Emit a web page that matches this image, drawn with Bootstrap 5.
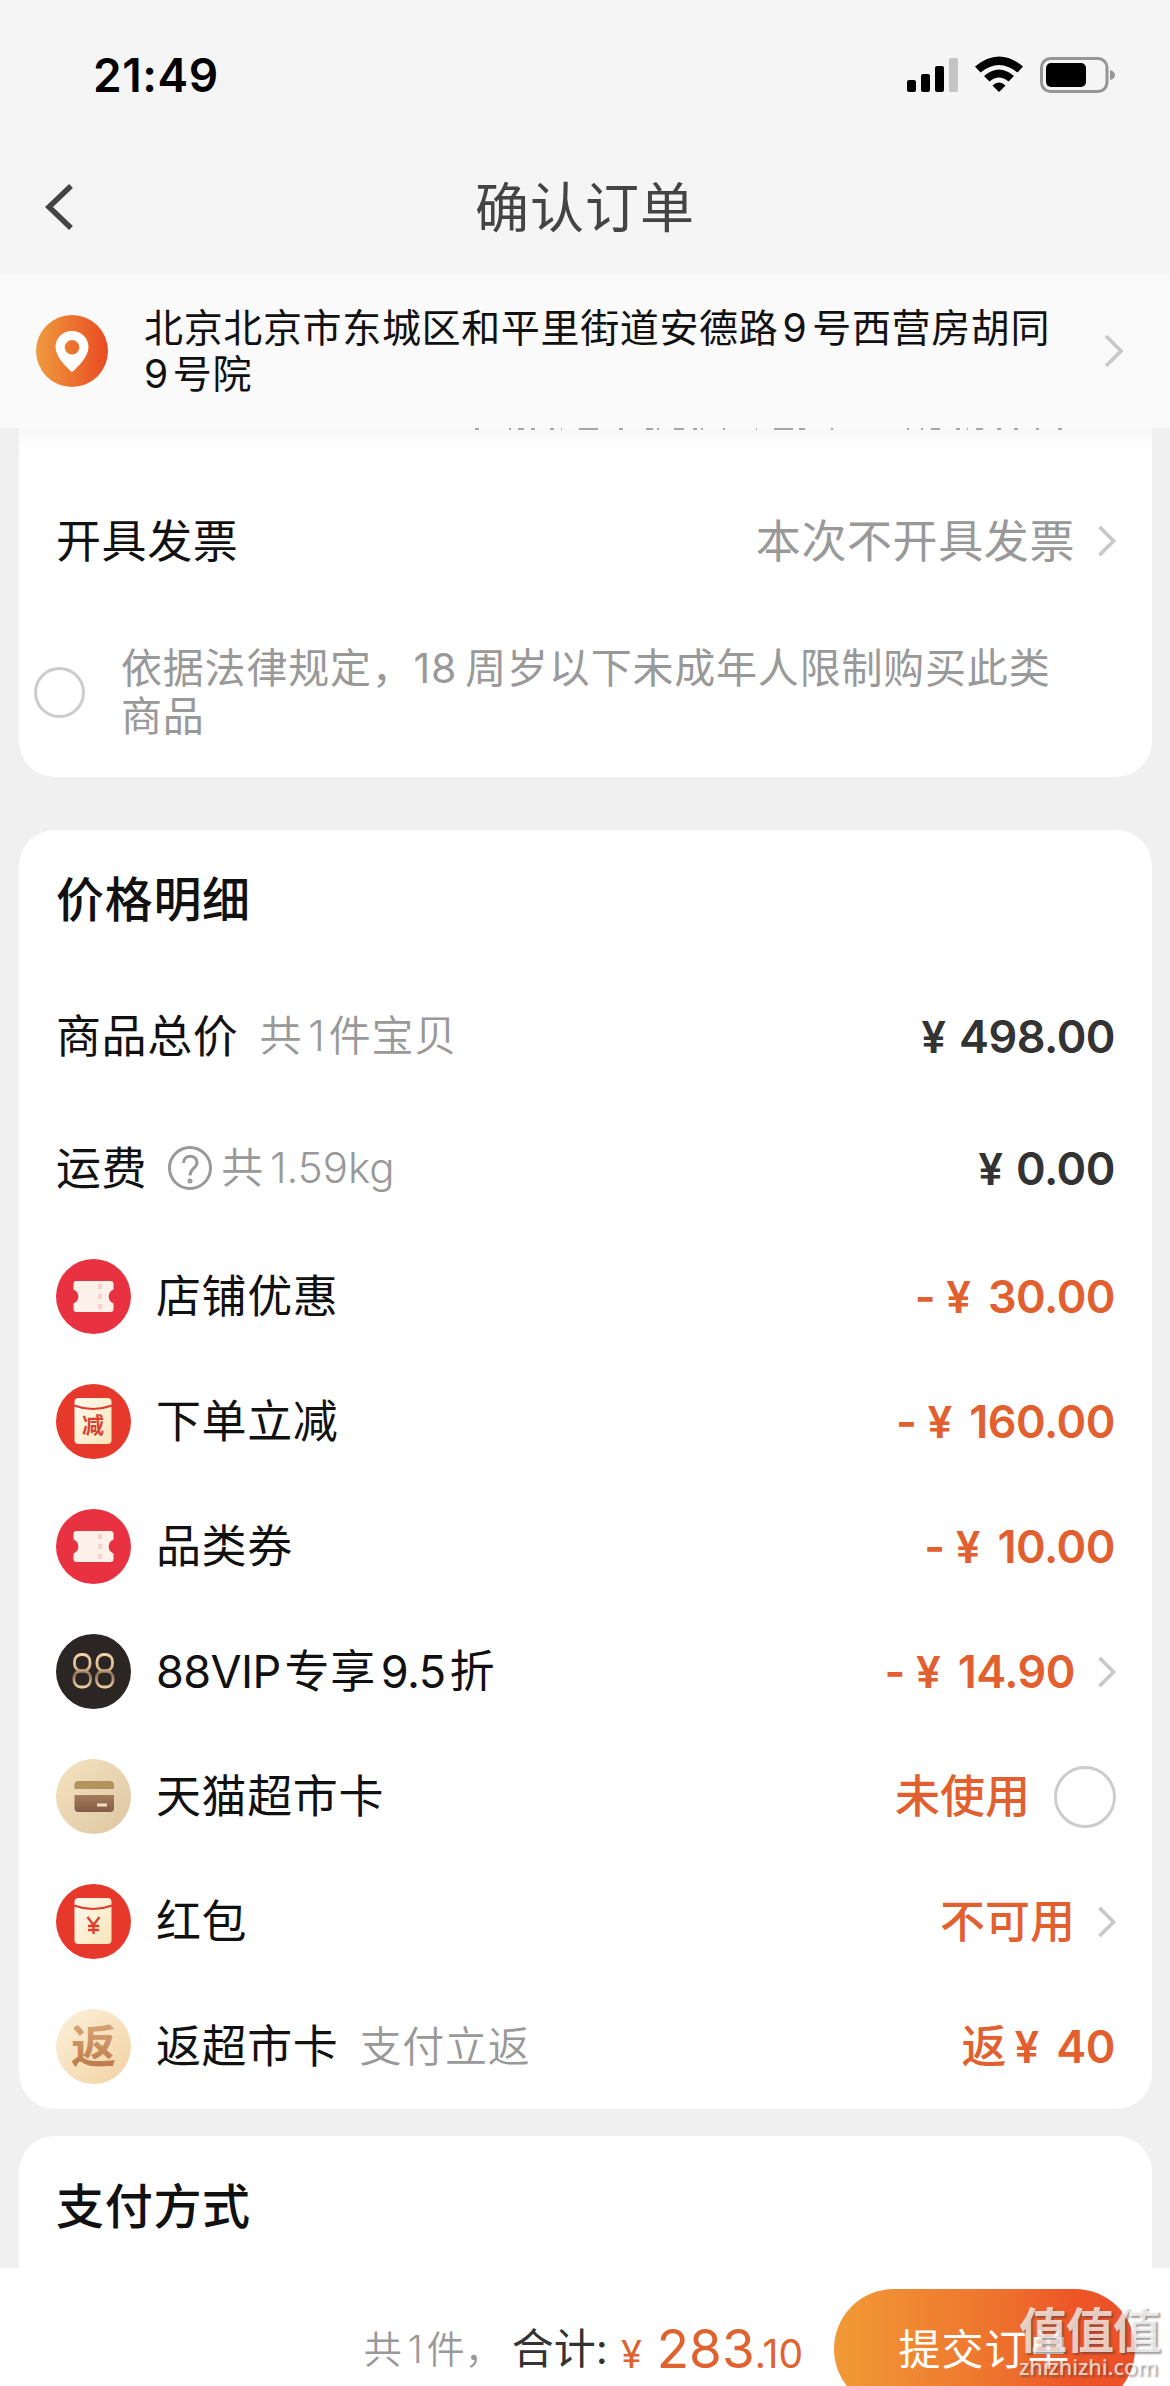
<!DOCTYPE html>
<html lang="zh-CN">
<head>
<meta charset="utf-8">
<meta name="viewport" content="width=device-width, initial-scale=1">
<title>确认订单</title>
<link href="https://cdn.jsdelivr.net/npm/bootstrap@5.3.0/dist/css/bootstrap.min.css" rel="stylesheet">
<style>
  body { background:#f0f0f0; font-family:Inter,"Noto Sans CJK SC",sans-serif; color:#111; font-size:45px; line-height:1; overflow:hidden; white-space:nowrap; }
  .screen { width:1170px; height:2386px; overflow:hidden; }
  .topbar { height:274px; background:#f5f5f5; }
  .status { height:149px; padding:0 55px 0 93px; }
  .clock { font-size:46px; font-weight:600; color:#000; letter-spacing:.6px; }
  .titlebar { height:116px; padding:0 45px; }
  .page-title { font-size:54px; color:#444; letter-spacing:1px; padding-top:3px; }
  .side { width:28px; }
  .address { height:154px; background:#fafafa; padding:0 46px 0 36px; }
  .address-text { font-size:39px; line-height:46px; letter-spacing:.65px; margin-left:36px; }
  .thin-gap { margin:0 5px 0 4px; }
  .tail { margin-left:4px; }
  .content-sheet { background:#fff; border-radius:36px; margin:0 18px 0 19px; }
  .first-sheet { height:349px; border-radius:0 0 36px 36px; background:linear-gradient(#f8f8f8,#fff 24px); }
  .price-sheet { margin-top:53px; }
  .peek { display:block; height:47px; }
  .line-row { height:132px; padding:0 37px; }
  .promo-row { height:125px; padding:0 37px; }
  .promo-row .label-text { margin-left:25px; }
  .label-text { letter-spacing:.6px; }
  .latin { letter-spacing:-.6px; }
  .heading { height:141px; padding:0 37px; font-size:48px; font-weight:500; letter-spacing:.7px; }
  .price-sheet .heading { height:140px; }
  .muted { color:#999; }
  .notice { height:170px; padding-left:15px; font-size:41px; line-height:48px; letter-spacing:.8px; }
  .notice > div { margin-left:36px; }
  .ring { width:51px; height:51px; border:3px solid #ccc; border-radius:50%; }
  .ring-lg { width:62px; height:62px; margin-left:24px; margin-right:-1px; }
  .amount { font-size:45px; font-weight:600; color:#333; letter-spacing:-.5px; }
  .amount .yen { font-size:44px; margin-right:13px; letter-spacing:0; }
  .off, .off .yen { color:#e25f2f; }
  .off .yen { margin-right:17px; }
  .dash { margin-right:11px; }
  .amount.cn, .amount .cn { font-weight:500; letter-spacing:0; }
  .arrow { margin-left:22px; margin-right:-2px; }
  .count { font-size:42px; margin-left:21px; letter-spacing:.8px; font-weight:350; }
  .num { margin:0 4px 0 6px; letter-spacing:0; }
  .help { margin-left:21px; }
  .weight { margin-left:9px; }
  .pay-sheet { height:132px; margin-top:27px; border-radius:36px 36px 0 0; }
  .footer-bar { height:118px; background:#fff; padding:21px 35px 0 0; }
  .sum { height:120px; color:#333; }
  .total { color:#e0622f; }
  .foot-count { font-size:38px; font-weight:350; }
  .foot-label { font-size:42px; margin-left:9px; }
  .foot-yen { font-size:38px; margin:0 15px 0 13px; }
  .foot-int { font-size:53px; }
  .foot-dec { font-size:39px; }
  .submit { width:301px; height:120px; margin-left:31px; border-radius:60px; border:0; color:#fff; font-size:42px; letter-spacing:1px; background:linear-gradient(90deg,#f19a36,#ee722e 55%,#ed5527 80%,#ec5028); }
  .watermark { position:absolute; left:1019px; top:2306px; width:146px; color:rgba(255,255,255,.74); text-shadow:2px 2px 2px rgba(70,60,60,.5); }
  .wm-a { font-size:48px; font-weight:700; line-height:50px; letter-spacing:-1px; }
  .wm-b { font-family:"Noto Sans",sans-serif; font-size:21.5px; font-weight:500; line-height:22px; }
</style>
<script src="https://cdn.jsdelivr.net/npm/bootstrap@5.3.0/dist/js/bootstrap.bundle.min.js"></script>
</head>
<body>
<svg width="0" height="0" class="position-absolute">
  <defs>
    <linearGradient id="pinBg"><stop offset="0" stop-color="#ee9b3e"/><stop offset="1" stop-color="#ea4b22"/></linearGradient>
    <linearGradient id="gold" x1="0" y1="0" x2="1" y2="1"><stop offset="0" stop-color="#f6e3c0"/><stop offset="1" stop-color="#dcc6a2"/></linearGradient>
    <linearGradient id="gold2" x1="0" y1="0" x2="1" y2="1"><stop offset="0" stop-color="#fcf1db"/><stop offset="1" stop-color="#f2d2a2"/></linearGradient>
    <linearGradient id="cardFoot" x1="0" y1="0" x2="0" y2="1"><stop offset="0" stop-color="#a67c5a"/><stop offset="1" stop-color="#805b48"/></linearGradient>
    <linearGradient id="envelope" x1="0" y1="0" x2="1" y2="1"><stop offset="0" stop-color="#fffaf0"/><stop offset="1" stop-color="#fbe5b8"/></linearGradient>
    <linearGradient id="fan" x1="0" y1="0" x2="0" y2="1"><stop offset="0" stop-color="#dba978"/><stop offset="1" stop-color="#b87445"/></linearGradient>
    <linearGradient id="neon" gradientUnits="userSpaceOnUse" x1="0" y1="19" x2="0" y2="54"><stop offset="0" stop-color="#f3d3a8"/><stop offset=".45" stop-color="#d9b78e"/><stop offset=".6" stop-color="#8f7156"/><stop offset="1" stop-color="#f1d0a4"/></linearGradient>
    <symbol id="ticket" viewBox="0 0 75 75">
      <circle cx="37.500" cy="37.500" r="37.500" fill="#e83241"/>
      <path fill="#fdf1ea" d="M20.500 22h34a3 3 0 0 1 3 3v5.500a7.500 7.500 0 0 0 0 14v5.500a3 3 0 0 1-3 3h-34a3 3 0 0 1-3-3v-5.500a7.500 7.500 0 0 0 0-14v-5.500a3 3 0 0 1 3-3z"/>
      <path d="M44 25v5m0 5v5m0 5v5" stroke="#fbcfcb" stroke-width="4"/>
    </symbol>
    <symbol id="packet" viewBox="0 0 75 75">
      <circle cx="37.500" cy="37.500" r="37.500" fill="#e7392b"/>
      <rect x="18.500" y="14" width="37" height="46" rx="4" fill="url(#envelope)"/>
      <path d="M18 21.500q19 7 38 0" fill="none" stroke="#e03a2e" stroke-width="2"/>
    </symbol>
    <symbol id="next" viewBox="0 0 20 34"><path d="M2 2l15 15L2 32" fill="none" stroke="#c8c8c8" stroke-width="3.800"/></symbol>
  </defs>
</svg>
<div class="screen position-relative d-flex flex-column">
  <header class="topbar">
    <div class="status d-flex align-items-center justify-content-between">
      <span class="clock">21:49</span>
      <svg width="208" height="38" viewBox="907 55 208 38">
        <rect x="907" y="79" width="9" height="12" rx="2"/><rect x="921" y="73" width="9" height="18" rx="2"/><rect x="935" y="65" width="9" height="26" rx="2"/><rect x="949" y="57" width="9" height="34" rx="2" fill="#c4c4c4"/>
        <path d="M975 65.500Q999 45.500 1023 65.500L1017.500 71.500Q999 56.500 980.500 71.500zM984 75Q999 62 1014 75L1008.500 80.500Q999 72.500 989.500 80.500zM992.500 84.500Q999 78.500 1005.500 84.500L999 91z" fill="#000"/>
        <rect x="1041.500" y="57.500" width="65.500" height="33" rx="9" fill="none" stroke="#969696" stroke-width="3"/>
        <rect x="1046" y="62" width="40" height="24" rx="5"/>
        <path d="M1110 69q5 1.500 5 5t-5 5z" fill="#969696"/>
      </svg>
    </div>
    <div class="titlebar d-flex align-items-center justify-content-between">
      <svg class="side" height="46" viewBox="0 0 28 46"><path d="M26 2L4 23l22 21" fill="none" stroke="#444" stroke-width="5.500"/></svg>
      <span class="page-title">确认订单</span>
      <span class="side"></span>
    </div>
  </header>

  <section class="address d-flex align-items-center">
    <svg width="72" height="72" viewBox="0 0 72 72"><circle cx="36" cy="36" r="36" fill="url(#pinBg)"/><path fill="#fff" fill-rule="evenodd" d="M36 16c9.500 0 16.500 7 16.500 16C52.500 41.500 42 52 36 57 30 52 19.500 41.500 19.500 32 19.500 23 26.500 16 36 16zm0 9a7.300 7.300 0 1 0 0 14.600A7.300 7.300 0 0 0 36 25z"/></svg>
    <div class="address-text">北京北京市东城区和平里街道安德路<span class="thin-gap">9</span>号西营房胡同<br>9<span class="tail">号院</span></div>
    <svg class="ms-auto" width="20" height="34"><use href="#next"/></svg>
  </section>

  <section class="content-sheet first-sheet">
    <svg class="peek" width="1133" height="47" viewBox="19 427 1133 47"><path stroke="#8a8a8a" stroke-width="1.500" d="M475 428h4M509 428h2M518 428h6M531 428h4M550 428h4M561 428h1M579 428h19M619 428h4M646 428h7M657 428h2M674 428h10M693 428h4M701 428h2M723 428h2M756 428h1M774 428h19M799 428h6M831 428h2M907 428h2M921 428h2M931 428h9M956 428h4M967 428h1M976 428h7M997 428h4M1014 428h4M1036 428h3M1058 428h4"/></svg>
    <div class="line-row d-flex align-items-center">
      <span class="label-text">开具发票</span>
      <span class="muted label-text ms-auto">本次不开具发票</span>
      <svg class="arrow" width="20" height="32"><use href="#next"/></svg>
    </div>
    <div class="notice muted d-flex align-items-center">
      <span class="ring"></span>
      <div>依据法律规定，<span class="me-2">18</span>周岁以下未成年人限制购买此类<br>商品</div>
    </div>
  </section>

  <section class="content-sheet price-sheet">
    <div class="heading d-flex align-items-center">价格明细</div>
    <div class="line-row d-flex align-items-center"><span class="label-text">商品总价</span><span class="muted count">共<span class="num">1</span>件宝贝</span><span class="amount ms-auto"><span class="yen">¥</span>498.00</span></div>
    <div class="line-row d-flex align-items-center"><span class="label-text">运费</span>
      <svg class="help" width="44" height="44" viewBox="0 0 44 44" fill="none" stroke="#999" stroke-width="3"><circle cx="22" cy="22" r="20.500"/><path d="M15.500 17c0-9 13.500-9 13.500-.5 0 6-7 5.500-7 13"/><circle cx="22" cy="35" r="1"/></svg>
      <span class="muted count weight">共<span class="num latin">1.59kg</span></span><span class="amount ms-auto"><span class="yen">¥</span>0.00</span></div>
    <div class="promo-row d-flex align-items-center"><svg width="75" height="75"><use href="#ticket"/></svg><span class="label-text">店铺优惠</span><span class="amount off ms-auto"><span class="dash">-</span><span class="yen">¥</span>30.00</span></div>
    <div class="promo-row d-flex align-items-center"><svg width="75" height="75"><use href="#packet"/><text x="37" y="49" text-anchor="middle" font-size="22" font-weight="700" fill="#d9402f">减</text></svg><span class="label-text">下单立减</span><span class="amount off ms-auto"><span class="dash">-</span><span class="yen">¥</span>160.00</span></div>
    <div class="promo-row d-flex align-items-center"><svg width="75" height="75"><use href="#ticket"/></svg><span class="label-text">品类券</span><span class="amount off ms-auto"><span class="dash">-</span><span class="yen">¥</span>10.00</span></div>
    <div class="promo-row d-flex align-items-center"><svg width="75" height="75" viewBox="0 0 75 75"><circle cx="37.500" cy="37.500" r="37.500" fill="#2b2523"/><g fill="none" stroke="url(#neon)" stroke-width="2.800"><rect x="18.500" y="20.500" width="15.500" height="16.500" rx="7"/><rect x="18" y="37" width="16.500" height="16" rx="7"/><rect x="41" y="20.500" width="15.500" height="16.500" rx="7"/><rect x="40.500" y="37" width="16.500" height="16" rx="7"/></g></svg><span class="label-text"><span class="latin">88VIP</span><span class="thin-gap">专享</span><span class="latin">9.5</span><span class="tail">折</span></span><span class="amount off ms-auto"><span class="dash">-</span><span class="yen">¥</span>14.90</span><svg class="arrow" width="20" height="32"><use href="#next"/></svg></div>
    <div class="promo-row d-flex align-items-center"><svg width="75" height="75" viewBox="0 0 75 75"><circle cx="37.500" cy="37.500" r="37.500" fill="url(#gold)"/><path d="M18.500 30v-4a4 4 0 0 1 4-4h31.500a4 4 0 0 1 4 4v4z" fill="#b3945f"/><path d="M18.500 36H58v13a4 4 0 0 1-4 4H22.500a4 4 0 0 1-4-4z" fill="url(#cardFoot)"/><path d="M41 46h10" stroke="#f3dfc4" stroke-width="3"/></svg><span class="label-text">天猫超市卡</span><span class="amount off cn ms-auto">未使用</span><span class="ring ring-lg"></span></div>
    <div class="promo-row d-flex align-items-center"><svg width="75" height="75"><use href="#packet"/><path d="M31.500 33l6 8 6-8M37.500 41v9M32 42h11M32 46h11" stroke="#d9402f" stroke-width="2.300" fill="none"/></svg><span class="label-text">红包</span><span class="amount off cn ms-auto">不可用</span><svg class="arrow" width="20" height="32"><use href="#next"/></svg></div>
    <div class="promo-row d-flex align-items-center"><svg width="75" height="75" viewBox="0 0 75 75"><circle cx="37.500" cy="37.500" r="37.500" fill="url(#gold2)"/><text x="37.500" y="54" text-anchor="middle" font-size="45" font-weight="700" fill="url(#fan)">返</text></svg><span class="label-text">返超市卡</span><span class="muted count">支付立返</span><span class="amount off ms-auto"><span class="cn">返</span><span class="yen ms-2">¥</span>40</span></div>
  </section>

  <section class="content-sheet pay-sheet">
    <div class="heading d-flex align-items-center">支付方式</div>
  </section>

  <footer class="footer-bar d-flex justify-content-end">
    <div class="sum d-flex align-items-center">
      <span class="muted foot-count">共<span class="num">1</span>件，</span>
      <span class="foot-label">合计:</span>
      <div class="total d-flex align-items-baseline">
        <span class="foot-yen">¥</span><span class="foot-int">283</span><span class="foot-dec">.10</span>
      </div>
    </div>
    <button type="button" class="submit btn p-0">提交订单</button>
  </footer>

  <div class="watermark"><div class="wm-a">值值值</div><div class="wm-b">zhizhizhi.com</div></div>
</div>
</body>
</html>
